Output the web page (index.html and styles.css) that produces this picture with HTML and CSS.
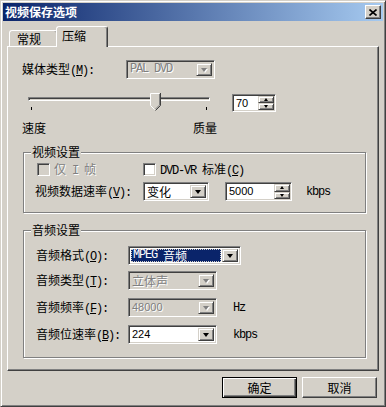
FILE: index.html
```html
<!DOCTYPE html>
<html lang="zh-CN">
<head>
    <meta charset="UTF-8">
    <title>视频保存选项</title>
    <link rel="stylesheet" href="styles.css">
</head>
<body>
<div class="window">
    <div class="titlebar">
        <span class="title">视频保存选项</span>
        <div class="close">
            <svg width="8" height="7" viewBox="0 0 8 7"><path d="M0.5 0.5 L7.5 6.5 M7.5 0.5 L0.5 6.5" stroke="#000" stroke-width="1.6"/></svg>
        </div>
    </div>

    <div class="tabs">
        <div class="tab">常规</div>
        <div class="tab active">压缩</div>
    </div>

    <div class="panel">
        <div class="row media">
            <span class="lbl">媒体类型<span class="m">(<u>M</u>):</span></span>
            <div class="combo off w89">
                <span class="val"><span class="m">PAL DVD</span></span>
                <span class="drop"><i class="arrow"></i></span>
            </div>
        </div>

        <div class="row quality">
            <div class="slider">
                <div class="track"></div>
                <i class="tick" style="left:5px"></i>
                <i class="tick" style="left:129px"></i>
                <i class="tick" style="left:180px"></i>
                <svg class="thumb" width="11" height="18" viewBox="0 0 11 18">
                    <path d="M0.5 12.5 V0.5 H10.5 V12.5 L5.5 17.5 Z" fill="#d4d0c8"/>
                    <path d="M0.5 12.5 V0.5 H9.5" stroke="#fff" fill="none"/>
                    <path d="M10.5 0 V12.5 L5.5 17.5" stroke="#404040" fill="none"/>
                    <path d="M9.5 1 V12 L5.5 16" stroke="#808080" fill="none"/>
                    <path d="M0.5 12.5 L4.5 16.5" stroke="#fff" fill="none"/>
                </svg>
            </div>
            <div class="spinedit w44">
                <span class="text n">70</span>
                <span class="spin"><i class="up"><b></b></i><i class="dn"><b></b></i></span>
            </div>
        </div>

        <div class="row scale">
            <span class="speed">速度</span>
            <span>质量</span>
        </div>

        <div class="group video">
            <span class="legend">视频设置</span>
            <div class="row checks">
                <label class="check first dis"><i class="box off"></i><span>仅<span class="m"> I </span>帧</span></label>
                <label class="check"><i class="box"></i><span><span class="m">DVD-VR </span>标准<span class="m">(<u>C</u>)</span></span></label>
            </div>
            <div class="row rate">
                <span class="lbl">视频数据速率<span class="m">(<u>V</u>):</span></span>
                <div class="combo w66">
                    <span class="val">变化</span>
                    <span class="drop"><i class="arrow"></i></span>
                </div>
                <div class="spinedit w67">
                    <span class="text n">5000</span>
                    <span class="spin"><i class="up"><b></b></i><i class="dn"><b></b></i></span>
                </div>
                <span class="unit m">kbps</span>
            </div>
        </div>

        <div class="group audio">
            <span class="legend">音频设置</span>
            <div class="row arow r1">
                <span class="lbl">音频格式<span class="m">(<u>O</u>):</span></span>
                <div class="combo w113">
                    <span class="val sel"><span class="m">MPEG </span>音频</span>
                    <span class="drop"><i class="arrow"></i></span>
                </div>
            </div>
            <div class="row arow r2">
                <span class="lbl">音频类型<span class="m">(<u>T</u>):</span></span>
                <div class="combo off w89">
                    <span class="val">立体声</span>
                    <span class="drop"><i class="arrow"></i></span>
                </div>
            </div>
            <div class="row arow r3">
                <span class="lbl">音频频率<span class="m">(<u>F</u>):</span></span>
                <div class="combo off w89">
                    <span class="val n">48000</span>
                    <span class="drop"><i class="arrow"></i></span>
                </div>
                <span class="unit m">Hz</span>
            </div>
            <div class="row arow r3">
                <span class="lbl">音频位速率<span class="m">(<u>B</u>):</span></span>
                <div class="combo w89">
                    <span class="val n">224</span>
                    <span class="drop"><i class="arrow"></i></span>
                </div>
                <span class="unit m">kbps</span>
            </div>
        </div>
    </div>

    <div class="buttons">
        <div class="btn default">确定</div>
        <div class="btn">取消</div>
    </div>
</div>
</body>
</html>
```

FILE: styles.css
```css
* {
    box-sizing: border-box;
}
body {
    margin: 0;
    background: #d4d0c8;
    color: #000;
    font-family: "Noto Sans CJK SC", "Noto Sans CJK JP", sans-serif;
    font-size: 12px;
}
.m {
    font-family: "Liberation Mono", monospace;
    font-size: 12px;
    letter-spacing: -1.2px;
}
.n {
    font-family: "Liberation Sans", Arial, sans-serif;
    font-size: 11px;
}
i, b {
    display: block;
}

/* window frame */
.window {
    width: 386px;
    height: 407px;
    padding: 2px;
    display: flex;
    flex-direction: column;
    border: 1px solid;
    border-color: #d4d0c8 #404040 #404040 #d4d0c8;
    box-shadow: inset 1px 1px #fff, inset -1px -1px #808080;
}
.titlebar {
    flex: none;
    height: 18px;
    padding: 0 2px;
    display: flex;
    align-items: center;
    justify-content: space-between;
    background: linear-gradient(to right, #0a246a, #a6caf0);
}
.title {
    color: #fff;
    font-weight: bold;
    line-height: 18px;
}
.close {
    width: 16px;
    height: 14px;
    display: flex;
    align-items: center;
    justify-content: center;
    background: #d4d0c8;
    border: 1px solid;
    border-color: #fff #404040 #404040 #fff;
    box-shadow: inset -1px -1px #808080;
}

/* tabs */
.tabs {
    flex: none;
    height: 25px;
    padding-left: 6px;
    display: flex;
    align-items: flex-end;
}
.tab {
    width: 49px;
    height: 16px;
    padding: 1px 0 0 7px;
    line-height: 14px;
    background: #d4d0c8;
    border: 1px solid;
    border-bottom: none;
    border-color: #fff #404040 transparent #fff;
    border-radius: 3px 3px 0 0;
    box-shadow: inset -1px 0 #808080;
}
.tab.active {
    width: 52px;
    height: 21px;
    margin: 0 0 -1px -2px;
    padding: 0 0 0 5px;
    line-height: 17px;
    position: relative;
    z-index: 1;
}
.panel {
    flex: none;
    margin-left: 4px;
    width: 372px;
    height: 325px;
    border: 1px solid;
    border-color: #fff #404040 #404040 #fff;
    box-shadow: inset -1px -1px #808080;
}

/* rows */
.row {
    display: flex;
    align-items: center;
}
.lbl {
    flex: none;
    line-height: 17px;
}
.media {
    margin: 13px 0 0 14px;
    height: 19px;
}
.media .lbl {
    width: 104px;
}
.quality {
    margin: 14px 0 0 18px;
    height: 19px;
    align-items: flex-start;
}
.slider {
    width: 188px;
    height: 19px;
    position: relative;
}
.track {
    margin: 4px 0 0 2px;
    width: 182px;
    height: 4px;
    border: 1px solid;
    border-color: #808080 #fff #fff #808080;
    box-shadow: inset 1px 1px #404040;
}
.tick {
    position: absolute;
    top: 14px;
    width: 1px;
    height: 3px;
    background: #000;
}
.thumb {
    position: absolute;
    left: 124px;
    top: 0;
}
.scale {
    margin: 7px 0 0 14px;
    line-height: 17px;
}
.speed {
    width: 171px;
}

/* group boxes */
.group {
    margin-left: 15px;
    width: 343px;
    display: flex;
    flex-direction: column;
    border: 1px solid #808080;
    box-shadow: inset 1px 1px #fff, 1px 1px #fff;
}
.video {
    margin-top: 16px;
    height: 61px;
}
.audio {
    margin-top: 17px;
    height: 128px;
}
.legend {
    align-self: flex-start;
    margin: -8px 0 0 7px;
    padding: 0 1px;
    line-height: 14px;
    background: #d4d0c8;
}
.checks {
    margin: 4px 0 0 13px;
    height: 13px;
}
.check {
    display: flex;
    align-items: center;
    line-height: 15px;
    white-space: pre;
}
.check.first {
    width: 106px;
}
.dis {
    color: #808080;
    text-shadow: 1px 1px #fff;
}
.box {
    flex: none;
    width: 13px;
    height: 13px;
    margin-right: 4px;
    background: #fff;
    border: 1px solid;
    border-color: #808080 #fff #fff #808080;
    box-shadow: inset 1px 1px #404040, inset -1px -1px #d4d0c8;
}
.box.off {
    background: #d4d0c8;
}
.rate {
    margin: 6px 0 0 11px;
    height: 19px;
}
.rate .lbl {
    width: 108px;
}
.arow {
    margin-left: 12px;
    height: 19px;
}
.arow .lbl {
    width: 92px;
}
.r1 {
    margin-top: 9px;
}
.r2 {
    margin-top: 6px;
}
.r3 {
    margin-top: 8px;
}
.unit {
    margin-left: 16px;
}
.rate .unit {
    margin-left: 14px;
}

/* controls */
.combo, .spinedit {
    flex: none;
    display: flex;
    height: 19px;
    padding: 1px;
    background: #fff;
    border: 1px solid;
    border-color: #808080 #fff #fff #808080;
    box-shadow: inset 1px 1px #404040, inset -1px -1px #d4d0c8;
}
.combo {
    padding: 2px;
}
.w44 { width: 44px; }
.w66 { width: 66px; }
.w67 { width: 67px; margin-left: 16px; }
.w89 { width: 89px; }
.w113 { width: 113px; }
.quality .spinedit {
    margin: 1px 0 0 18px;
    height: 18px;
}
.val {
    flex: 1;
    display: flex;
    align-items: center;
    padding-left: 1px;
    line-height: 13px;
    white-space: pre;
}
.val.sel {
    margin-right: 1px;
    padding-left: 2px;
    background: #0a246a;
    color: #fff;
    outline: 1px dotted #d4d0c8;
    outline-offset: -1px;
}
.drop {
    flex: none;
    width: 16px;
    display: flex;
    align-items: center;
    justify-content: center;
    background: #d4d0c8;
    border: 1px solid;
    border-color: #d4d0c8 #404040 #404040 #d4d0c8;
    box-shadow: inset 1px 1px #fff, inset -1px -1px #808080;
}
.arrow {
    width: 0;
    height: 0;
    border-style: solid;
    border-width: 4px 3.5px 0;
    border-color: #000 transparent transparent;
}
.combo.off {
    background: #d4d0c8;
}
.combo.off .val {
    color: #808080;
    text-shadow: 1px 1px #fff;
}
.combo.off .arrow {
    border-top-color: #808080;
    filter: drop-shadow(1px 1px 0 #fff);
}
.text {
    flex: 1;
    padding-left: 2px;
    line-height: 14px;
}
.spin {
    flex: none;
    width: 16px;
    display: flex;
    flex-direction: column;
}
.spin i {
    flex: 1;
    display: flex;
    align-items: center;
    justify-content: center;
    background: #d4d0c8;
    border: 1px solid;
    border-color: #d4d0c8 #404040 #404040 #d4d0c8;
    box-shadow: inset 1px 1px #fff, inset -1px -1px #808080;
}
.spin b {
    width: 0;
    height: 0;
    border-style: solid;
    border-color: transparent;
}
.spin .up b {
    border-width: 0 2.5px 3px;
    border-bottom-color: #000;
}
.spin .dn b {
    border-width: 3px 2.5px 0;
    border-top-color: #000;
}

/* dialog buttons */
.buttons {
    flex: none;
    margin-top: 6px;
    padding-right: 6px;
    display: flex;
    justify-content: flex-end;
    gap: 5px;
}
.btn {
    width: 75px;
    height: 21px;
    line-height: 19px;
    text-align: center;
    border: 1px solid;
    border-color: #fff #404040 #404040 #fff;
    box-shadow: inset -1px -1px #808080;
}
.btn.default {
    border-color: #000;
    box-shadow: inset 1px 1px #fff, inset -1px -1px #404040, inset -2px -2px #808080;
}
```
